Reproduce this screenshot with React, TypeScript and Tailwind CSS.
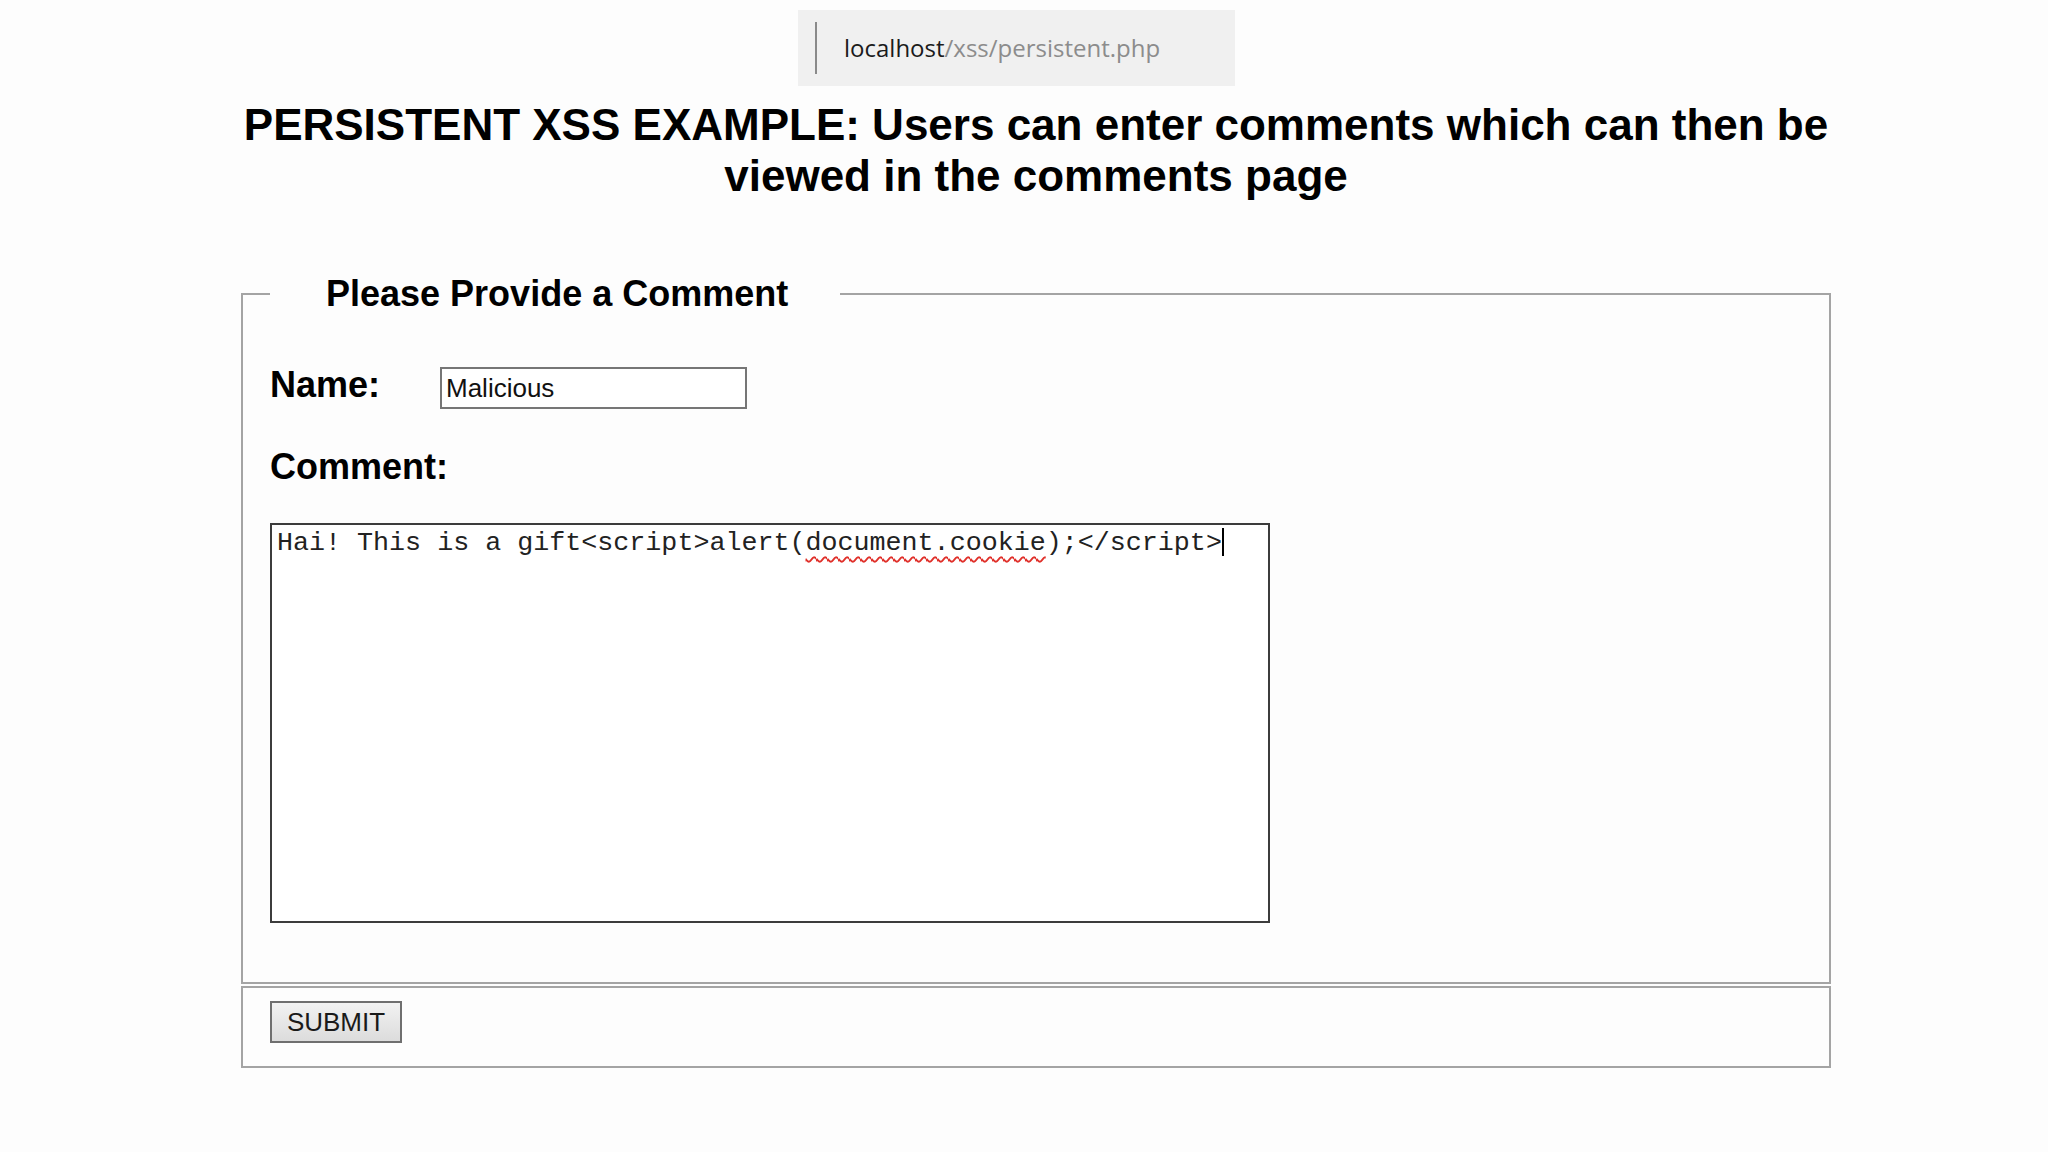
import React from "react";

const App = () => {
  return (
    <div className="min-h-screen w-full bg-[#fdfdfd] font-['Liberation_Sans',Arial,sans-serif] text-black">
      <div className="pt-[10px]">
        <div className="ml-[798px] w-[437px] h-[76px] bg-[#f0f0f0] flex items-center">
          <div className="ml-[17px] w-[2px] h-[52px] bg-[#8a8a8a]"></div>
          <div className="ml-[27px] font-['Open_Sans',sans-serif] text-[24px] leading-none">
            <span className="text-[#1b1b1b]">localhost</span>
            <span className="text-[#8c8c8c]">/xss/persistent.php</span>
          </div>
        </div>
      </div>

      <div className="ml-[241px] w-[1590px]">
        <h1 className="mt-[13px] text-center text-[44px] font-bold leading-[51px] whitespace-nowrap">
          PERSISTENT XSS EXAMPLE: Users can enter comments which can then be
          <br />
          viewed in the comments page
        </h1>

        <form className="mt-[66px]">
          <fieldset className="border-2 border-[#a4a4a4] pl-[27px] pr-[27px] pb-[59px]">
            <legend className="pl-[56px] pr-[52px] text-[36px] font-bold">
              Please Provide a Comment
            </legend>

            <div className="mt-[37px] flex items-baseline">
              <label className="w-[170px] text-[36px] font-bold">Name:</label>
              <div className="w-[307px] h-[42px] border-2 border-[#767676] bg-white px-[4px] py-[4px] text-[26px] leading-[30px] text-[#111]">
                Malicious
              </div>
            </div>

            <div className="mt-[28px] text-[36px] font-bold">Comment:</div>

            <div className="mt-[29px] w-[1000px] h-[400px] border-2 border-[#3c3c3c] bg-white pl-[5px] pt-[3px] font-['Liberation_Mono','Courier_New',monospace] text-[26.7px] leading-[31px] text-[#222] whitespace-pre">
              Hai! This is a gift&lt;script&gt;alert(
              <span className="underline decoration-wavy decoration-[#e0302a] decoration-[1.5px] underline-offset-[6px]">
                document.cookie
              </span>
              );&lt;/script&gt;
              <span className="inline-block w-[2px] h-[28px] bg-black align-[-6px]"></span>
            </div>
          </fieldset>

          <div className="mt-[2px] border-2 border-[#a4a4a4] pl-[27px] pt-[13px] pb-[23px]">
            <button
              type="button"
              className="w-[132px] h-[42px] border-2 border-[#6f6f6f] bg-gradient-to-b from-[#f2f2f2] to-[#dcdcdc] text-[26px] text-[#1a1a1a] leading-none"
            >
              SUBMIT
            </button>
          </div>
        </form>
      </div>
    </div>
  );
};

export default App;
